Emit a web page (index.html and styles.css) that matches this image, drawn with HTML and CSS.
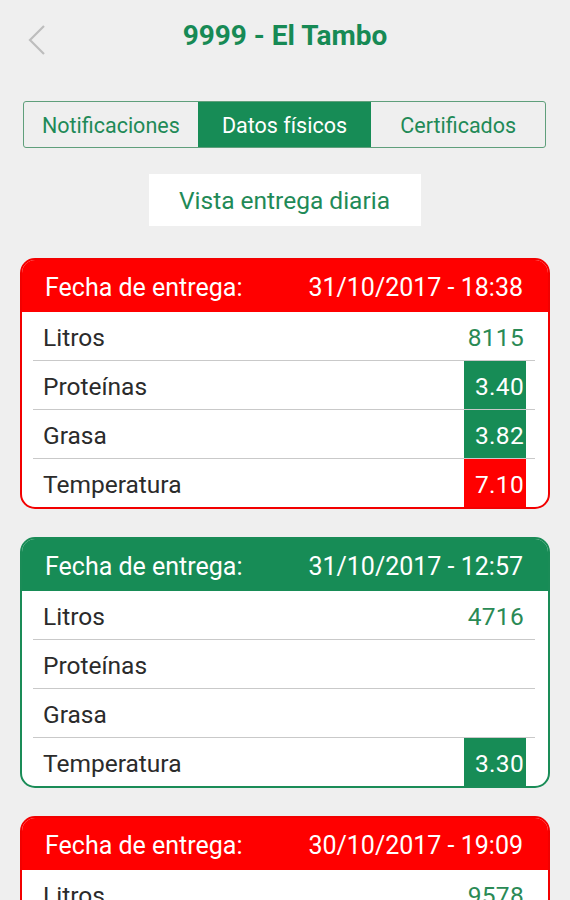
FILE: index.html
```html
<!DOCTYPE html>
<html lang="es">
<head>
<meta charset="utf-8">
<link rel="stylesheet" href="styles.css">
</head>
<body>
<header class="topbar">
  <svg class="back" width="20" height="32" viewBox="0 0 20 32"><path d="M17 2 L3 16 L17 30" fill="none" stroke="#bdbdbd" stroke-width="2.2"/></svg>
  <h1 class="title">9999 - El Tambo</h1>
</header>
<nav class="tabs">
  <div class="tab">Notificaciones</div>
  <div class="tab active">Datos físicos</div>
  <div class="tab">Certificados</div>
</nav>
<div class="btn-wrap"><div class="btn">Vista entrega diaria</div></div>
<main class="list">
  <section class="card red">
    <div class="card-head"><span>Fecha de entrega:</span><span>31/10/2017 - 18:38</span></div>
    <div class="row"><span class="label">Litros</span><span class="val plain">8115</span></div>
    <div class="row"><span class="label">Proteínas</span><span class="val ok">3.40</span></div>
    <div class="row"><span class="label">Grasa</span><span class="val ok">3.82</span></div>
    <div class="row"><span class="label">Temperatura</span><span class="val bad">7.10</span></div>
  </section>
  <section class="card green">
    <div class="card-head"><span>Fecha de entrega:</span><span>31/10/2017 - 12:57</span></div>
    <div class="row"><span class="label">Litros</span><span class="val plain">4716</span></div>
    <div class="row"><span class="label">Proteínas</span></div>
    <div class="row"><span class="label">Grasa</span></div>
    <div class="row"><span class="label">Temperatura</span><span class="val ok">3.30</span></div>
  </section>
  <section class="card red">
    <div class="card-head"><span>Fecha de entrega:</span><span>30/10/2017 - 19:09</span></div>
    <div class="row"><span class="label">Litros</span><span class="val plain">9578</span></div>
    <div class="row"><span class="label">Proteínas</span></div>
  </section>
</main>
</body>
</html>
```
FILE: styles.css
```css
* { box-sizing: border-box; }
html, body { margin: 0; padding: 0; }
body {
  background: #efefef;
  font-family: Roboto, "Noto Sans", sans-serif;
  width: 570px;
  height: 900px;
  overflow: hidden;
}
.topbar {
  position: relative;
  height: 70px;
  display: flex;
  align-items: center;
  justify-content: center;
}
.back {
  position: absolute;
  left: 27px;
  top: 24px;
}
.title {
  margin: 0;
  font-size: 28px;
  font-weight: 700;
  color: #178a55;
}
.tabs {
  display: flex;
  margin: 31px 24px 0 23px;
  height: 47px;
  border: 1.5px solid #5f9f7b;
  border-radius: 3px;
  overflow: hidden;
}
.tab {
  flex: 1;
  display: flex;
  align-items: center;
  justify-content: center;
  font-size: 21.5px;
  color: #1f8a57;
  padding-top: 1px;
}
.tab.active {
  background: #178c56;
  color: #fff;
}
.btn-wrap {
  display: flex;
  justify-content: center;
  margin-top: 26px;
}
.btn {
  width: 272px;
  height: 52px;
  margin-left: -1px;
  background: #fff;
  display: flex;
  align-items: center;
  justify-content: center;
  font-size: 24.5px;
  color: #1f8a57;
}
.list {
  display: flex;
  flex-direction: column;
  gap: 28px;
  margin: 32px 20px 0 20px;
}
.card {
  background: #fff;
  border-radius: 15px;
  border: 2px solid;
  overflow: hidden;
  flex-shrink: 0;
}
.card.red { border-color: #f20000; }
.card.green { border-color: #1a8c57; }
.card-head {
  height: 52px;
  display: flex;
  justify-content: space-between;
  align-items: center;
  padding: 2px 25px 0 23px;
  color: #fff;
  font-size: 25px;
}
.card.red .card-head { background: #ff0000; }
.card.green .card-head { background: #178c56; }
.row {
  height: 48px;
  margin: 0 13px 0 11px;
  padding: 0 9px 0 10px;
  display: flex;
  justify-content: space-between;
  align-items: stretch;
  font-size: 24.5px;
  color: #2b2b2b;
}
.row + .row { height: 49px; border-top: 1px solid #c9c9c9; }
.label { display: flex; align-items: center; padding-top: 2px; }
.val {
  display: flex;
  align-items: center;
  justify-content: flex-end;
  padding: 2px 2px 0 0;
  letter-spacing: 0.3px;
}
.val.plain { color: #2a8a55; }
.val.ok, .val.bad {
  width: 62px;
  color: #fff;
}
.val.ok { background: #178c56; }
.val.bad { background: #ff0000; }
```
